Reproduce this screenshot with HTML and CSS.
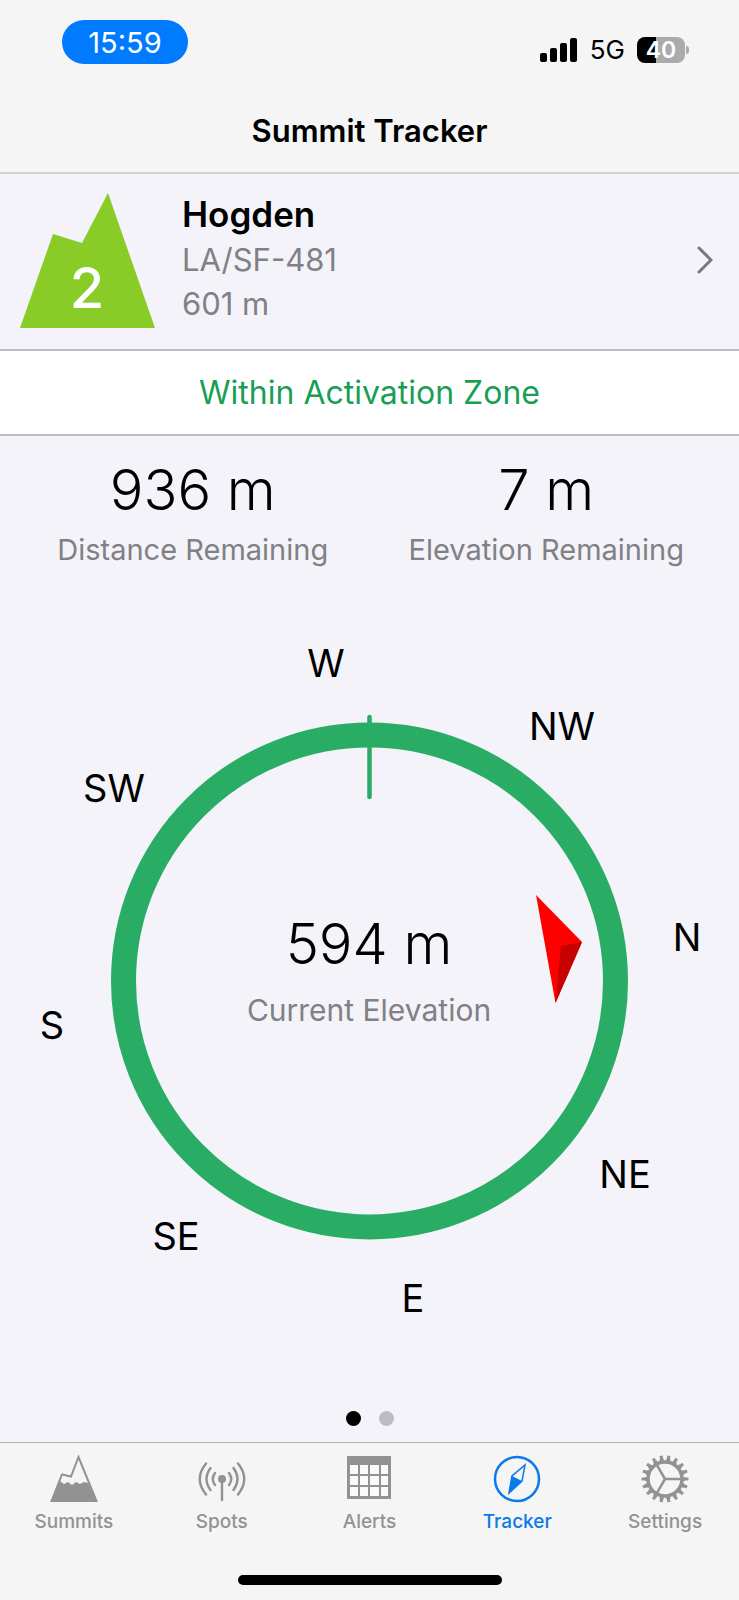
FILE: index.html
```html
<!DOCTYPE html>
<html lang="en">
<head>
<meta charset="utf-8">
<meta name="viewport" content="width=device-width, initial-scale=1">
<title>Summit Tracker</title>
<link rel="stylesheet" href="styles.css">
</head>
<body>
<div class="app">
  <header class="header">
    <div class="status">
      <span class="clock">15:59</span>
      <div class="indicators">
        <svg class="signal" viewBox="0 0 38 24" aria-hidden="true"><rect x="0" y="15" width="7" height="9" rx="2"/><rect x="10" y="10" width="7" height="14" rx="2"/><rect x="20" y="5" width="7" height="19" rx="2"/><rect x="30" y="0" width="7" height="24" rx="2"/></svg>
        <span class="network">5G</span>
        <div class="battery"><span class="battery-body">40</span><span class="battery-nub"></span></div>
      </div>
    </div>
    <h1 class="title">Summit Tracker</h1>
  </header>

  <main class="main">
    <a class="summit" href="#summit">
      <svg class="summit-badge" viewBox="0 0 135 135" aria-hidden="true">
        <path d="M0 135 33 41 62 50 88 0 135 135Z" fill="#89cb27"/>
        <text x="67" y="115" class="badge-text">2</text>
      </svg>
      <span class="summit-info">
        <strong class="summit-name">Hogden</strong>
        <span class="summit-line">LA/SF-481</span>
        <span class="summit-line">601 m</span>
      </span>
      <svg class="chevron" viewBox="0 0 16 28" aria-hidden="true"><path d="M2 2 14 14 2 26"/></svg>
    </a>

    <p class="zone">Within Activation Zone</p>

    <section class="stats">
      <div class="stat"><span class="stat-value">936 m</span><span class="stat-label">Distance Remaining</span></div>
      <div class="stat"><span class="stat-value">7 m</span><span class="stat-label">Elevation Remaining</span></div>
    </section>

    <svg class="compass" viewBox="0 0 739 780" role="img" aria-label="Compass">
      <circle cx="369.500" cy="361" r="246" fill="none" stroke="#29ad65" stroke-width="25"/>
      <path d="M369.500 97V177" stroke="#29ad65" stroke-width="4.500" stroke-linecap="round"/>
      <path d="M536 275 582 322 555.500 383Z" fill="#fe0000"/>
      <path d="M561 326 582 322 555.500 383Z" fill="#c70000"/>
      <g class="points">
        <text x="326" y="57">W</text>
        <text x="562" y="120">NW</text>
        <text x="687" y="331">N</text>
        <text x="625" y="568">NE</text>
        <text x="413" y="692">E</text>
        <text x="176" y="630">SE</text>
        <text x="52" y="419">S</text>
        <text x="114" y="182">SW</text>
      </g>
      <text x="369" y="344" class="elevation">594 m</text>
      <text x="369" y="401" class="elevation-label">Current Elevation</text>
    </svg>

    <div class="pager">
      <button class="dot dot-on" aria-label="Page 1"></button>
      <button class="dot" aria-label="Page 2"></button>
    </div>
  </main>

  <footer class="footer">
    <nav class="tabs">
      <a class="tab" href="#summits">
        <svg class="tab-icon" viewBox="0 0 48 48" aria-hidden="true"><path d="M1.500 46 12 19.500 21 21.500 28.500 2 46.500 46Z" fill="none" stroke="currentColor" stroke-width="2"/><path d="M10 26 14 29 18 27 22 30 26 27 30 29 34 27 38 28 46.500 46H1.500Z" fill="currentColor"/></svg>
        Summits</a>
      <a class="tab" href="#spots">
        <svg class="tab-icon" viewBox="0 0 48 48" aria-hidden="true"><g fill="none" stroke="currentColor" stroke-width="2.400" stroke-linecap="round"><path d="M24 24V45"/><path d="M17 18Q12.500 24 17 30M31 18Q35.500 24 31 30M12.500 13Q4.500 24 12.500 35M35.500 13Q43.500 24 35.500 35M8 8.500Q-4.500 24 8 39.500M40 8.500Q52.500 24 40 39.500"/></g><circle cx="24" cy="24" r="4" fill="currentColor"/></svg>
        Spots</a>
      <a class="tab" href="#alerts">
        <svg class="tab-icon" viewBox="0 0 48 48" aria-hidden="true"><path d="M2 1H46V44H2Z" fill="currentColor"/><path fill="#fafafa" d="M5 10h8v9H5zM15 10h8v9h-8zM25 10h9v9h-9zM36 10h7v9h-7zM5 21h8v9H5zM15 21h8v9h-8zM25 21h9v9h-9zM36 21h7v9h-7zM5 32h8v9H5zM15 32h8v9h-8zM25 32h9v9h-9zM36 32h7v9h-7z"/></svg>
        Alerts</a>
      <a class="tab tab-on" href="#tracker" aria-current="page">
        <svg class="tab-icon" viewBox="0 0 48 48" aria-hidden="true"><circle cx="24" cy="24" r="22" fill="none" stroke="currentColor" stroke-width="2.500"/><path d="M32 10 29 26 16 38 19 21Z" fill="none" stroke="currentColor" stroke-width="1.500"/><path d="M19 21 29 26 16 38Z" fill="currentColor"/></svg>
        Tracker</a>
      <a class="tab" href="#settings">
        <svg class="tab-icon" viewBox="0 0 48 48" aria-hidden="true"><g fill="none" stroke="currentColor"><circle cx="24" cy="24" r="17" stroke-width="3.500"/><circle cx="24" cy="24" r="19" stroke-width="3" pathLength="180" stroke-dasharray="6 4" stroke-dashoffset="3"/><circle cx="24" cy="24" r="21.500" stroke-width="4" pathLength="180" stroke-dasharray="4 6" stroke-dashoffset="2"/><path d="M24 24H41M24 24 15.500 9.300M24 24 15.500 38.700" stroke-width="2.500"/></g></svg>
        Settings</a>
    </nav>
    <div class="home-indicator"></div>
  </footer>
</div>
</body>
</html>
```
FILE: styles.css
```css
* { box-sizing: border-box; }
body { margin: 0; background: #f3f3f9; color: #000; font-family: Inter, "Liberation Sans", sans-serif; }
a { color: inherit; text-decoration: none; }
svg { display: block; flex: none; }

.app { min-height: 100vh; display: flex; flex-direction: column; }

.header { background: #f5f5f5; border-bottom: 2px solid #d0d0d4; }
.status { display: flex; justify-content: space-between; align-items: flex-start; padding: 20px 50px 0 62px; }
.clock { width: 126px; height: 44px; border-radius: 22px; background: #007aff; color: #fff; font-size: 29px; line-height: 46px; text-align: center; }
.indicators { display: flex; align-items: center; gap: 12px; padding-top: 16px; }
.signal { width: 38px; height: 24px; }
.network { font-size: 26px; line-height: 28px; }
.battery { display: flex; align-items: center; gap: 1px; }
.battery-body { width: 48px; height: 26px; border-radius: 8px; background: linear-gradient(90deg, #000 40%, #ababab 40%); color: #fff; font-size: 23px; font-weight: 600; line-height: 26px; text-align: center; }
.battery-nub { width: 3px; height: 8px; border-radius: 0 3px 3px 0; background: #ababab; }
.title { margin: 0; padding: 47px 16px 21px; font-size: 31px; line-height: 40px; font-weight: 600; text-align: center; }

.main { flex: 1; display: flex; flex-direction: column; }
.summit { display: flex; align-items: center; gap: 27px; padding: 16px 26px 19px 20px; border-bottom: 2px solid #bcbcc4; }
.summit-badge { width: 135px; height: 135px; }
.badge-text { font-size: 56px; font-weight: 500; fill: #fff; text-anchor: middle; }
.summit-info { flex: 1; display: flex; flex-direction: column; padding-bottom: 4px; }
.summit-name { font-size: 35px; line-height: 48px; font-weight: 600; }
.summit-line { font-size: 31px; line-height: 44px; color: #808085; }
.chevron { width: 16px; height: 28px; fill: none; stroke: #77777c; stroke-width: 3; stroke-linecap: round; }
.zone { margin: 0; padding: 20px 16px 19px; background: #fff; border-bottom: 2px solid #bcbcc4; color: #189e55; font-size: 32px; line-height: 44px; text-align: center; }
.stats { display: grid; grid-template-columns: 1fr 1fr; padding: 20px 16px 0; }
.stat { display: flex; flex-direction: column; align-items: center; }
.stat-value { font-size: 56px; line-height: 68px; font-weight: 300; }
.stat-label { font-size: 29px; line-height: 52px; color: #808085; }
.compass { width: 100%; margin-top: 44px; }
.points { font-size: 38px; text-anchor: middle; }
.elevation { font-size: 56px; font-weight: 300; text-anchor: middle; }
.elevation-label { font-size: 30px; fill: #808085; text-anchor: middle; }
.pager { display: flex; justify-content: center; gap: 18px; margin-top: auto; padding: 0 0 16px; }
.dot { width: 15px; height: 15px; padding: 0; border: 0; border-radius: 50%; background: #bcbcc2; }
.dot-on { background: #000; }

.footer { background: #f5f5f5; border-top: 1px solid #b4b4b8; padding-bottom: 15px; }
.tabs { display: grid; grid-template-columns: repeat(5, 1fr); padding-top: 12px; }
.tab { display: flex; flex-direction: column; align-items: center; gap: 5px; color: #929292; font-size: 19px; line-height: 28px; font-weight: 500; }
.tab-on { color: #0a7aea; }
.tab-icon { width: 48px; height: 48px; }
.home-indicator { width: 264px; height: 10px; margin: 39px auto 0; border-radius: 5px; background: #000; }
```
